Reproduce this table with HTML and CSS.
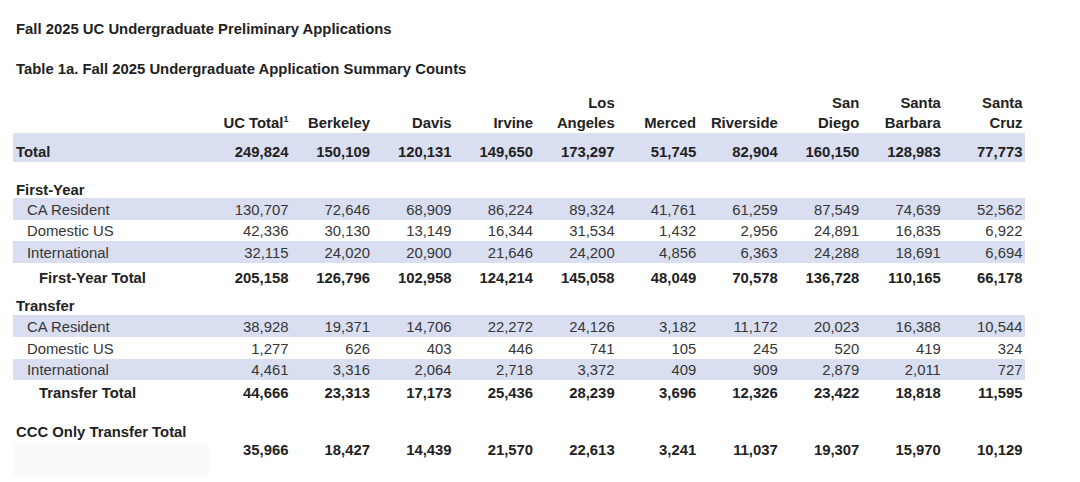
FILE: index.html
```html
<!DOCTYPE html>
<html lang="en">
<head>
<meta charset="utf-8">
<title>Fall 2025 UC Undergraduate Preliminary Applications</title>
<link rel="stylesheet" href="styles.css">
</head>
<body>
<div class="page">
  <div class="title">Fall 2025 UC Undergraduate Preliminary Applications</div>
  <div class="title subtitle">Table 1a. Fall 2025 Undergraduate Application Summary Counts</div>
  <table class="counts">
    <colgroup>
      <col class="c-label">
      <col class="c-num"><col class="c-num"><col class="c-num"><col class="c-num"><col class="c-num">
      <col class="c-num"><col class="c-num"><col class="c-num"><col class="c-num"><col class="c-num">
    </colgroup>
    <tr class="head">
      <th class="lbl"></th>
      <th>UC Total<sup class="fn">1</sup></th>
      <th>Berkeley</th>
      <th>Davis</th>
      <th>Irvine</th>
      <th>Los<br>Angeles</th>
      <th>Merced</th>
      <th>Riverside</th>
      <th>San<br>Diego</th>
      <th>Santa<br>Barbara</th>
      <th>Santa<br>Cruz</th>
    </tr>
    <tr class="total band bold">
      <td class="lbl">Total</td>
      <td>249,824</td><td>150,109</td><td>120,131</td><td>149,650</td><td>173,297</td>
      <td>51,745</td><td>82,904</td><td>160,150</td><td>128,983</td><td>77,773</td>
    </tr>
    <tr class="section bold">
      <td class="lbl" colspan="11">First-Year</td>
    </tr>
    <tr class="data band">
      <td class="lbl sub">CA Resident</td>
      <td>130,707</td><td>72,646</td><td>68,909</td><td>86,224</td><td>89,324</td>
      <td>41,761</td><td>61,259</td><td>87,549</td><td>74,639</td><td>52,562</td>
    </tr>
    <tr class="data">
      <td class="lbl sub">Domestic US</td>
      <td>42,336</td><td>30,130</td><td>13,149</td><td>16,344</td><td>31,534</td>
      <td>1,432</td><td>2,956</td><td>24,891</td><td>16,835</td><td>6,922</td>
    </tr>
    <tr class="data band">
      <td class="lbl sub">International</td>
      <td>32,115</td><td>24,020</td><td>20,900</td><td>21,646</td><td>24,200</td>
      <td>4,856</td><td>6,363</td><td>24,288</td><td>18,691</td><td>6,694</td>
    </tr>
    <tr class="subtotal fy bold">
      <td class="lbl subsub">First-Year Total</td>
      <td>205,158</td><td>126,796</td><td>102,958</td><td>124,214</td><td>145,058</td>
      <td>48,049</td><td>70,578</td><td>136,728</td><td>110,165</td><td>66,178</td>
    </tr>
    <tr class="section tr-section bold">
      <td class="lbl" colspan="11">Transfer</td>
    </tr>
    <tr class="data band">
      <td class="lbl sub">CA Resident</td>
      <td>38,928</td><td>19,371</td><td>14,706</td><td>22,272</td><td>24,126</td>
      <td>3,182</td><td>11,172</td><td>20,023</td><td>16,388</td><td>10,544</td>
    </tr>
    <tr class="data">
      <td class="lbl sub">Domestic US</td>
      <td>1,277</td><td>626</td><td>403</td><td>446</td><td>741</td>
      <td>105</td><td>245</td><td>520</td><td>419</td><td>324</td>
    </tr>
    <tr class="data band">
      <td class="lbl sub">International</td>
      <td>4,461</td><td>3,316</td><td>2,064</td><td>2,718</td><td>3,372</td>
      <td>409</td><td>909</td><td>2,879</td><td>2,011</td><td>727</td>
    </tr>
    <tr class="subtotal tt bold">
      <td class="lbl subsub">Transfer Total</td>
      <td>44,666</td><td>23,313</td><td>17,173</td><td>25,436</td><td>28,239</td>
      <td>3,696</td><td>12,326</td><td>23,422</td><td>18,818</td><td>11,595</td>
    </tr>
    <tr class="section ccc-section bold">
      <td class="lbl" colspan="11">CCC Only Transfer Total</td>
    </tr>
    <tr class="ccc bold">
      <td class="lbl shade"></td>
      <td>35,966</td><td>18,427</td><td>14,439</td><td>21,570</td><td>22,613</td>
      <td>3,241</td><td>11,037</td><td>19,307</td><td>15,970</td><td>10,129</td>
    </tr>
  </table>
</div>
</body>
</html>
```

FILE: styles.css
```css
html, body {
  margin: 0;
  padding: 0;
  background: #ffffff;
}

body {
  font-family: "Liberation Sans", Arial, sans-serif;
  font-size: 14.85px;
  color: #363636;
}

.page {
  padding: 19px 0 0 13px;
}

.title {
  font-weight: bold;
  color: #222222;
  line-height: 20px;
  padding-left: 3px;
}

.subtitle {
  margin-top: 20px;
}

.counts {
  margin-top: 14px;
  width: 1012px;
  table-layout: fixed;
  border-collapse: collapse;
  border-spacing: 0;
}

.c-label {
  width: 196.4px;
}

.c-num {
  width: 81.56px;
}

.counts th,
.counts td {
  padding: 0 2.5px 0 0;
  text-align: right;
  white-space: nowrap;
}

.counts .lbl {
  text-align: left;
  padding-left: 3px;
}

.counts .sub {
  padding-left: 14px;
}

.counts .subsub {
  padding-left: 26px;
}

.bold td,
.counts th {
  font-weight: bold;
  color: #222222;
}

.band {
  background: #d9dff1;
}

.head {
  height: 40px;
}

.head th {
  vertical-align: bottom;
  line-height: 20px;
}

.fn {
  font-size: 9px;
  line-height: 0;
  vertical-align: 6px;
}

.total {
  height: 29px;
}

.total td {
  vertical-align: bottom;
  line-height: 20px;
}

.section {
  height: 36px;
}

.section td {
  vertical-align: bottom;
  line-height: 16px;
}

.tr-section {
  height: 22.3px;
}

.tr-section td {
  line-height: 18px;
}

.ccc-section td {
  line-height: 18px;
}

.data {
  height: 21.7px;
}

.data td {
  vertical-align: bottom;
  line-height: 19px;
}

.fy {
  height: 30px;
}

.tt {
  height: 24.7px;
}

.subtotal td {
  vertical-align: middle;
  line-height: 20px;
}

.ccc {
  height: 36px;
}

.ccc td {
  vertical-align: top;
  line-height: 18px;
}

.ccc .shade {
  background: #fafafa;
}
```
